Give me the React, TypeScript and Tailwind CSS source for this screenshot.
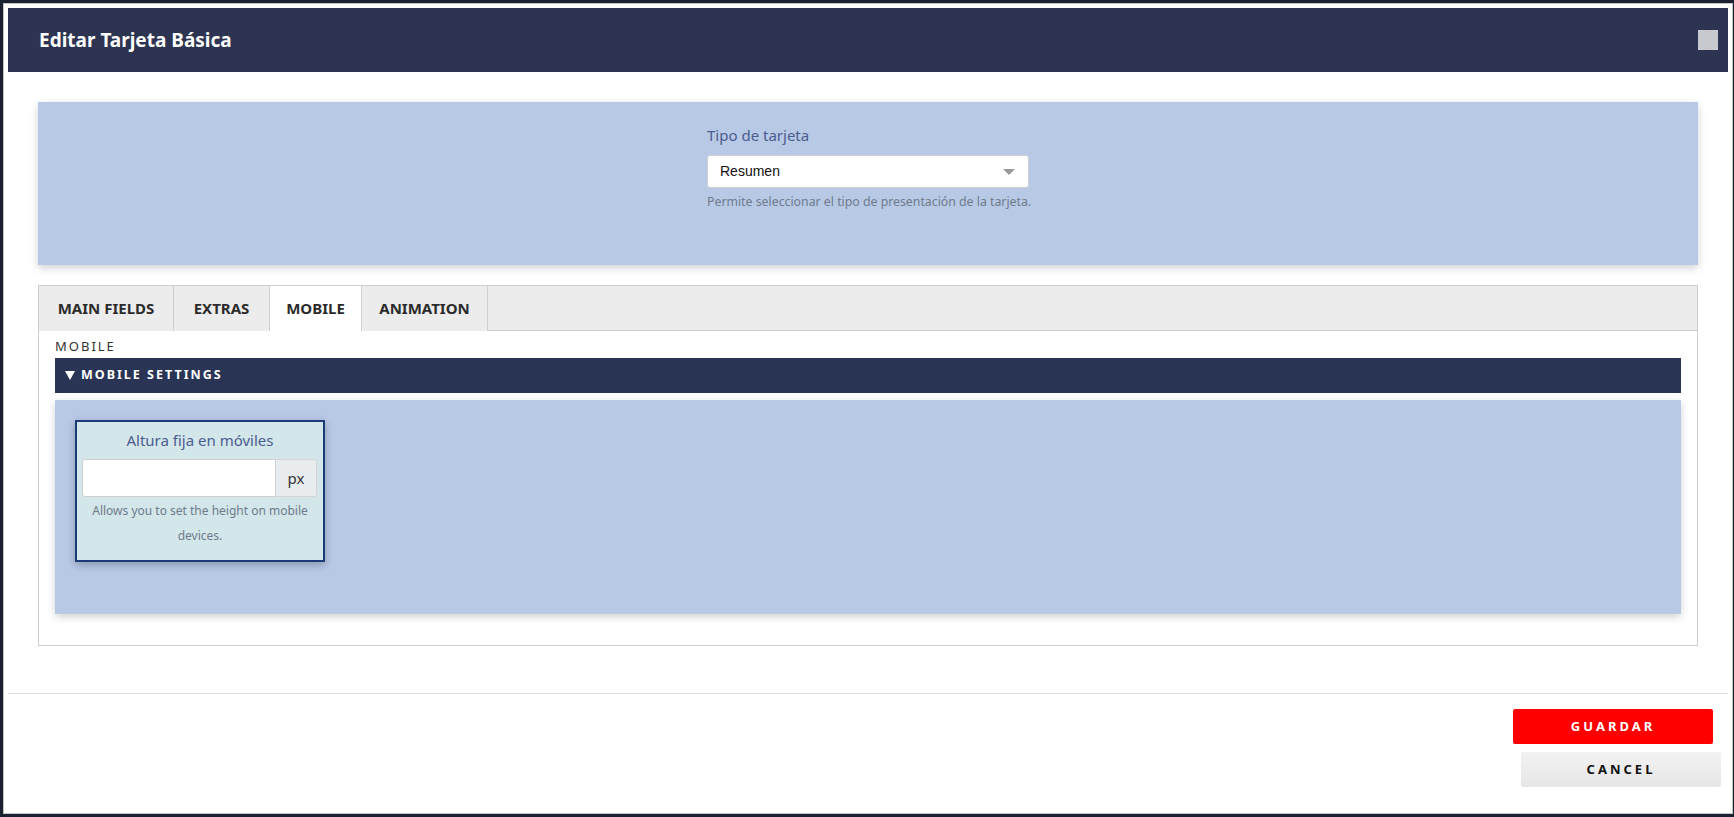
import { useState } from 'react';

const TABS = [
  { name: 'MAIN FIELDS', w: 'w-[135px]' },
  { name: 'EXTRAS', w: 'w-[96px]' },
  { name: 'MOBILE', w: 'w-[92px]' },
  { name: 'ANIMATION', w: 'w-[126px]' },
];

export default function App() {
  const [tab, setTab] = useState('MOBILE');
  const [open, setOpen] = useState(true);

  return (
    <div
      className="h-[817px] w-full overflow-hidden bg-[#1b2130] pt-[3px] pl-[3px]"
      style={{ fontFamily: '"Noto Sans", "Open Sans", sans-serif' }}
    >
      <div className="flex h-[811px] w-[1730px] flex-col border border-[#c4c4c4] bg-white p-[4px]">
        {/* header */}
        <header className="flex h-[64px] shrink-0 items-center justify-between bg-[#2d3451] pl-[31px] pr-[10px]">
          <h1 className="text-[19px] font-bold text-white">Editar Tarjeta Básica</h1>
          <button className="h-5 w-5 bg-[#c8c9cf]" title="Cerrar" />
        </header>

        <div className="shrink-0 px-[30px] pt-[30px] pb-[47px]">
          {/* tipo de tarjeta */}
          <section className="h-[163px] bg-[#b8c9e6] shadow-[0_3px_8px_rgba(0,0,0,0.18)]">
            <div className="mx-auto w-[322px] pt-[22px]">
              <label className="block text-[15px] leading-[22px] text-[#4b5c8e]">Tipo de tarjeta</label>
              <div className="mt-[9px] flex h-[33px] items-center justify-between rounded-[3px] border border-[#d0d0d0] bg-white pl-[12px] pr-[13px]">
                <span
                  className="text-[14px] text-[#111]"
                  style={{ fontFamily: '"Liberation Sans", Arial, sans-serif' }}
                >
                  Resumen
                </span>
                <span className="h-0 w-0 border-x-[6px] border-t-[6px] border-x-transparent border-t-[#999]" />
              </div>
              <p className="mt-[6px] whitespace-nowrap text-[12.3px] leading-[16px] text-[#6f7b8c]">
                Permite seleccionar el tipo de presentación de la tarjeta.
              </p>
            </div>
          </section>

          {/* tabs */}
          <section className="mt-[20px] h-[361px] border border-[#cfcfcf]">
            <div className="flex h-[45px] border-b border-[#cfcfcf] bg-[#ececec]">
              {TABS.map(t => (
                <button
                  key={t.name}
                  onClick={() => setTab(t.name)}
                  className={`h-[45px] ${t.w} border-r border-[#cfcfcf] text-[15px] font-bold text-[#2b2b2b] ${
                    tab === t.name ? 'bg-white' : 'bg-[#ececec]'
                  }`}
                >
                  {t.name}
                </button>
              ))}
            </div>

            <div className="px-[16px] pt-[6px]">
              <div className="text-[13px] leading-[19px] tracking-[2px] text-[#333]">MOBILE</div>
              <button
                onClick={() => setOpen(o => !o)}
                className="mt-[2px] flex h-[35px] w-full items-center gap-[6px] bg-[#2a3556] pl-[10px] text-[12.5px] font-bold tracking-[2px] text-white"
              >
                <span className="h-0 w-0 border-x-[5px] border-t-[9px] border-x-transparent border-t-white" />
                MOBILE SETTINGS
              </button>
              {open && (
                <div className="mt-[7px] h-[214px] bg-[#b8c9e6] p-[20px] shadow-[0_3px_8px_rgba(0,0,0,0.18)]">
                  <div className="flex h-[142px] w-[250px] flex-col items-center border-2 border-[#1c3a78] bg-[#d3e6ea] px-[5px] pt-[7px] shadow-[0_3px_8px_rgba(0,0,0,0.25)]">
                    <div className="text-[15px] leading-[22px] text-[#4b5c8e]">Altura fija en móviles</div>
                    <div className="mt-[8px] flex h-[38px] w-full pr-px">
                      <input className="h-full w-0 min-w-0 flex-1 rounded-l-[3px] border border-[#cfcfcf] bg-white px-2 text-[14px] outline-none" />
                      <span className="flex w-[41px] shrink-0 items-center justify-center rounded-r-[3px] border border-l-0 border-[#d6d6d6] bg-[#e9ecef] text-[15px] text-[#333]">
                        px
                      </span>
                    </div>
                    <p className="mt-[1px] text-center text-[12px] leading-[25px] text-[#6f7b8c]">
                      Allows you to set the height on mobile devices.
                    </p>
                  </div>
                </div>
              )}
            </div>
          </section>
        </div>

        {/* footer */}
        <footer className="flex-1 border-t border-[#dcdcdc]">
          <div className="flex flex-col items-end pt-[15px]">
            <button className="mr-[15px] h-[35px] w-[200px] rounded-[2px] bg-[#ff0000] text-[13px] font-bold tracking-[3px] text-white">
              GUARDAR
            </button>
            <button className="mr-[7px] mt-[8px] h-[35px] w-[200px] rounded-[2px] bg-gradient-to-b from-[#f2f2f2] to-[#e6e6e6] text-[13px] font-bold tracking-[3px] text-[#111]">
              CANCEL
            </button>
          </div>
        </footer>
      </div>
    </div>
  );
}
